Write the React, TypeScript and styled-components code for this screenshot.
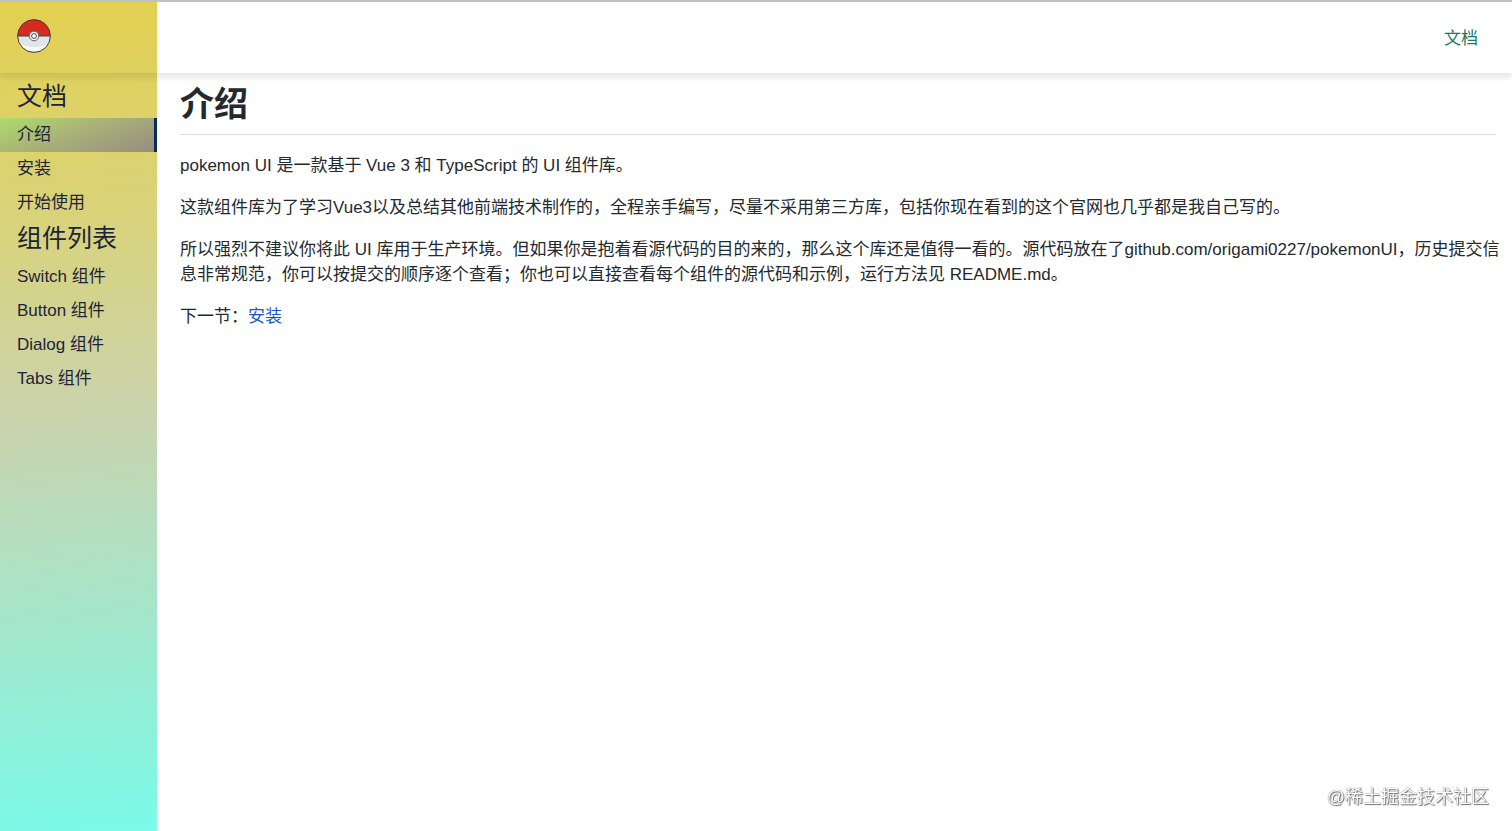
import React from 'react';
import styled, { createGlobalStyle } from 'styled-components';

const GlobalStyle = createGlobalStyle`
  *, *::before, *::after { box-sizing: border-box; }
  body {
    margin: 0;
    background: #fff;
    color: #24292f;
    font: 17px/25px "Liberation Sans", "Noto Sans CJK SC", sans-serif;
  }
`;

const Page = styled.div`
  display: grid;
  grid-template-columns: 157px minmax(0, 1fr);
  grid-template-rows: 71px 1fr;
  min-height: 100vh;
  border-top: 2px solid #bfc1c3;
`;

const Header = styled.header`
  grid-row: 1;
  grid-column: 1 / -1;
  z-index: 1;
  display: flex;
  align-items: flex-start;
  justify-content: space-between;
  padding: 17px 34px 0 17px;
  box-shadow: 0 5px 5px rgba(51, 51, 51, 0.1);
`;

const LogoLink = styled.a`
  display: flex;
`;

const TopLink = styled.a`
  padding: 7px 0;
  color: #1d7a5f;
  text-decoration: none;
`;

const Sidebar = styled.aside`
  grid-row: 1 / -1;
  grid-column: 1;
  padding-top: 76px;
  color: #1d2438;
  background: linear-gradient(175deg, #e3d04f 0%, #d8d37c 27%, #cbd3ae 50%, #7afbe9 100%);
`;

const GroupTitle = styled.h2`
  margin: 0;
  padding: 0 17px 4px;
  font-size: 25px;
  line-height: 36px;
  font-weight: 400;
`;

const Menu = styled.ul`
  margin: 0;
  padding: 0;
  list-style: none;
`;

const MenuLink = styled.a<{ $active?: boolean }>`
  display: block;
  padding: 4px 13px 5px 17px;
  color: inherit;
  text-decoration: none;
  border-right: 3px solid ${(p) => (p.$active ? '#0b2a5c' : 'transparent')};
  background: ${(p) =>
    p.$active ? 'linear-gradient(160deg, #addc6c 0%, #a9b278 45%, #978c80 100%) border-box' : 'none'};
`;

const Content = styled.main`
  grid-row: 2;
  grid-column: 2;
  padding: 6px 8px 17px 23px;
`;

const Title = styled.h1`
  margin: 0 8px 18px 0;
  padding-bottom: 5px;
  font-size: 34px;
  line-height: 50px;
  font-weight: 700;
  border-bottom: 1px solid #d8dee4;
`;

const Paragraph = styled.p`
  margin: 0 0 17px;
`;

const NextLink = styled.a`
  color: #1a56cc;
  text-decoration: none;
`;

const Watermark = styled.div`
  position: fixed;
  right: 23px;
  bottom: 21px;
  font-size: 18px;
  color: #fff;
  text-shadow: 0 0 1px #444, 1px 1px 1px #777;
`;

const Pokeball = () => (
  <svg width="34" height="34" viewBox="0 0 34 34" aria-hidden="true">
    <circle cx="17" cy="17" r="16.4" fill="#dfe6e8" />
    <path d="M.6 17a16.4 16.4 0 0 1 32.8 0z" fill="#d6291f" />
    <path d="M3 25a16.4 16.4 0 0 0 28 0c-7 4-21 4-28 0z" fill="#f7fafa" />
    <path d="M1 17h32" stroke="#444" strokeWidth="1" />
    <circle cx="17" cy="17" r="16.4" fill="none" stroke="#4c3a30" strokeWidth="1" />
    <circle cx="17" cy="17" r="4.8" fill="#f4f4f4" stroke="#666" strokeWidth="1" />
    <circle cx="17" cy="17" r="2.4" fill="#fff" stroke="#444" strokeWidth="1" />
  </svg>
);

const groups = [
  { title: '文档', items: ['介绍', '安装', '开始使用'] },
  { title: '组件列表', items: ['Switch 组件', 'Button 组件', 'Dialog 组件', 'Tabs 组件'] },
];

export default function App() {
  return (
    <>
      <GlobalStyle />
      <Page lang="zh-CN">
        <Header>
          <LogoLink href="#" aria-label="pokemon UI">
            <Pokeball />
          </LogoLink>
          <TopLink href="#doc">文档</TopLink>
        </Header>
        <Sidebar>
          <nav>
            {groups.map((group) => (
              <React.Fragment key={group.title}>
                <GroupTitle>{group.title}</GroupTitle>
                <Menu>
                  {group.items.map((item) => (
                    <li key={item}>
                      <MenuLink href={`#${item}`} $active={item === '介绍'}>
                        {item}
                      </MenuLink>
                    </li>
                  ))}
                </Menu>
              </React.Fragment>
            ))}
          </nav>
        </Sidebar>
        <Content>
          <Title>介绍</Title>
          <Paragraph>pokemon UI 是一款基于 Vue 3 和 TypeScript 的 UI 组件库。</Paragraph>
          <Paragraph>
            这款组件库为了学习Vue3以及总结其他前端技术制作的，全程亲手编写，尽量不采用第三方库，包括你现在看到的这个官网也几乎都是我自己写的。
          </Paragraph>
          <Paragraph>
            所以强烈不建议你将此 UI 库用于生产环境。但如果你是抱着看源代码的目的来的，那么这个库还是值得一看的。源代码放在了github.com/origami0227/pokemonUI，历史提交信息非常规范，你可以按提交的顺序逐个查看；你也可以直接查看每个组件的源代码和示例，运行方法见 README.md。
          </Paragraph>
          <Paragraph>
            下一节：<NextLink href="#install">安装</NextLink>
          </Paragraph>
        </Content>
      </Page>
      <Watermark>@稀土掘金技术社区</Watermark>
    </>
  );
}
